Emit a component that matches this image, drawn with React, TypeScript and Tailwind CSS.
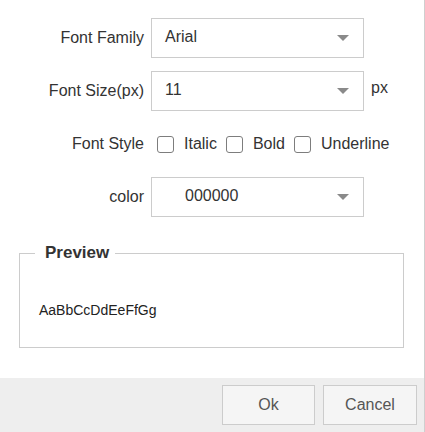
const FONT = { fontFamily: '"Liberation Sans", Arial, sans-serif' };

function Caret() {
  return (
    <svg width="12" height="6" viewBox="0 0 12 6" className="shrink-0">
      <path d="M0 0 L12 0 L6 6 Z" fill="#8a8a8a" />
    </svg>
  );
}

function Select({ value, indent = "pl-[13px]" }: { value: string; indent?: string }) {
  return (
    <div
      className={`flex h-[40px] w-[213px] items-center justify-between border border-[#cccccc] bg-white ${indent} pr-[14px]`}
    >
      <span className="-mt-[3px] text-[16px] text-[#333333]">{value}</span>
      <Caret />
    </div>
  );
}

function Check({ label }: { label: string }) {
  return (
    <label className="flex items-center gap-[10px]">
      <span className="h-[17px] w-[17px] rounded-[3px] border-[1.5px] border-[#7d7d7d] bg-white" />
      <span className="text-[16px] text-[#333333]">{label}</span>
    </label>
  );
}

function Row({ label, children }: { label: string; children: React.ReactNode }) {
  return (
    <div className="flex items-center">
      <div className="w-[144px] shrink-0 text-right text-[16px] text-[#333333]">{label}</div>
      {children}
    </div>
  );
}

export default function App() {
  return (
    <div style={FONT} className="flex h-[432px] w-[425px] flex-col border-r border-[#cfcfcf] bg-white">
      <div className="flex-1 pt-[18px]">
        <Row label="Font Family">
          <div className="ml-[7px]">
            <Select value="Arial" />
          </div>
        </Row>
        <div className="mt-[13px]">
          <Row label="Font Size(px)">
            <div className="ml-[7px] flex items-center gap-[7px]">
              <Select value="11" />
              <span className="-mt-[6px] text-[16px] text-[#333333]">px</span>
            </div>
          </Row>
        </div>
        <div className="mt-[21px]">
          <Row label="Font Style">
            <div className="ml-[13px] flex items-center gap-[9px]">
              <Check label="Italic" />
              <Check label="Bold" />
              <Check label="Underline" />
            </div>
          </Row>
        </div>
        <div className="mt-[21px]">
          <Row label="color">
            <div className="ml-[7px]">
              <Select value="000000" indent="pl-[33px]" />
            </div>
          </Row>
        </div>
        <fieldset className="ml-[19px] mr-[20px] mt-[26px] h-[105px] border border-[#cccccc] p-0">
          <legend className="ml-[15px] pl-[10px] pr-[6px] text-[17px] font-bold leading-[20px] text-[#333333]">
            Preview
          </legend>
          <div className="pl-[19px] pt-[37px] text-[14px] text-[#222222]">AaBbCcDdEeFfGg</div>
        </fieldset>
      </div>
      <div className="flex h-[54px] items-start justify-end gap-[8px] bg-[#eeeeee] pr-[7px] pt-[7px]">
        <button className="h-[40px] w-[93px] border border-[#cccccc] bg-[#f5f5f5] text-[16px] text-[#555555]">
          Ok
        </button>
        <button className="h-[40px] w-[94px] border border-[#cccccc] bg-[#f5f5f5] text-[16px] text-[#555555]">
          Cancel
        </button>
      </div>
    </div>
  );
}
